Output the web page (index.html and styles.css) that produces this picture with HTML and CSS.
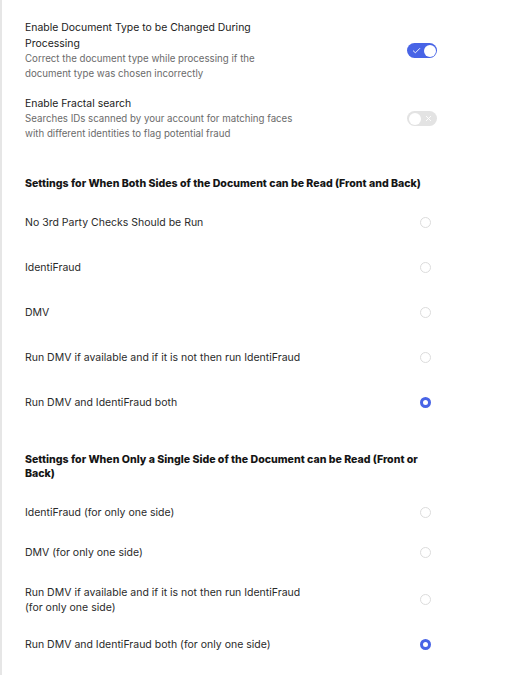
FILE: index.html
```
<!DOCTYPE html>
<html>
<head>
<meta charset="utf-8">
<link rel="stylesheet" href="styles.css">
</head>
<body>
<div class="panel">
  <div class="setting setting-cut">
    <div class="setting-text">
      <div class="desc">Verify the document before scanning</div>
    </div>
  </div>
  <div class="setting">
    <div class="setting-text">
      <div class="title">Enable Document Type to be Changed During Processing</div>
      <div class="desc">Correct the document type while processing if the document type was chosen incorrectly</div>
    </div>
    <span class="toggle on">
      <svg class="toggle-mark" width="9" height="7" viewBox="0 0 9 7"><path d="M1 3.6 L3.4 5.8 L8 1.2" fill="none" stroke="#fff" stroke-width="0.9"/></svg>
      <span class="knob"></span>
    </span>
  </div>
  <div class="setting">
    <div class="setting-text">
      <div class="title">Enable Fractal search</div>
      <div class="desc">Searches IDs scanned by your account for matching faces with different identities to flag potential fraud</div>
    </div>
    <span class="toggle off">
      <span class="knob"></span>
      <svg class="toggle-mark" width="7" height="7" viewBox="0 0 7 7"><path d="M1 1 L6 6 M6 1 L1 6" fill="none" stroke="#fff" stroke-width="0.9"/></svg>
    </span>
  </div>

  <div class="heading first">Settings for When Both Sides of the Document can be Read (Front and Back)</div>
  <div class="options tall">
    <div class="option"><span class="option-label">No 3rd Party Checks Should be Run</span><span class="radio"></span></div>
    <div class="option"><span class="option-label">IdentiFraud</span><span class="radio"></span></div>
    <div class="option"><span class="option-label">DMV</span><span class="radio"></span></div>
    <div class="option"><span class="option-label">Run DMV if available and if it is not then run IdentiFraud</span><span class="radio"></span></div>
    <div class="option"><span class="option-label">Run DMV and IdentiFraud both</span><span class="radio checked"></span></div>
  </div>

  <div class="heading second">Settings for When Only a Single Side of the Document can be Read (Front or Back)</div>
  <div class="options compact">
    <div class="option"><span class="option-label">IdentiFraud (for only one side)</span><span class="radio"></span></div>
    <div class="option"><span class="option-label">DMV (for only one side)</span><span class="radio"></span></div>
    <div class="option"><span class="option-label">Run DMV if available and if it is not then run IdentiFraud (for only one side)</span><span class="radio"></span></div>
    <div class="option"><span class="option-label">Run DMV and IdentiFraud both (for only one side)</span><span class="radio checked"></span></div>
  </div>
</div>
</body>
</html>
```
FILE: styles.css
```
html, body {
  margin: 0;
  padding: 0;
  background: #ffffff;
  overflow: hidden;
}
body {
  font-family: Inter, "Noto Sans", sans-serif;
  color: #222;
}
.panel {
  border-left: 2px solid #e6e6e6;
  min-height: 688px;
  padding: 0 83px 0 23px;
  box-sizing: border-box;
}
.setting {
  display: flex;
  align-items: center;
  justify-content: space-between;
  margin-bottom: 15px;
}
.setting-cut {
  margin-top: -13px;
  margin-bottom: 18.5px;
}
.setting-text {
  width: 272px;
}
.title {
  font-size: 10.45px;
  line-height: 16px;
  color: #222;
}
.desc {
  font-size: 9.7px;
  line-height: 14.5px;
  color: #6b6b6b;
}
.toggle {
  position: relative;
  display: flex;
  align-items: center;
  justify-content: space-between;
  width: 30px;
  height: 15px;
  border-radius: 8px;
  box-sizing: border-box;
  padding: 0 1.5px 0 1.5px;
  flex-shrink: 0;
}
.toggle.on {
  background: #4864e6;
  padding-left: 5px;
}
.toggle.off {
  background: #e3e3e3;
  padding-right: 5px;
}
.knob {
  width: 12px;
  height: 12px;
  border-radius: 50%;
  background: #fff;
}
.toggle-mark {
  display: block;
}
.heading {
  font-size: 10.6px;
  line-height: 14px;
  font-weight: 800;
  color: #151515;
  padding-right: 10px;
}
.heading.first {
  margin-top: 36px;
  margin-bottom: 9px;
}
.heading.second {
  margin-top: 28px;
  margin-bottom: 11px;
}
.option {
  display: flex;
  align-items: center;
  justify-content: space-between;
  font-size: 10.5px;
  line-height: 15px;
  color: #2a2a2a;
  padding-right: 6px;
}
.options.tall .option {
  height: 45px;
}
.options.compact .option {
  padding-top: 12.5px;
  padding-bottom: 12.5px;
}
.options.compact .option:last-child {
  padding-top: 10px;
}
.option-label {
  max-width: 280px;
}
.radio {
  width: 11px;
  height: 11px;
  border-radius: 50%;
  border: 1px solid #dcdcdc;
  box-sizing: border-box;
  flex-shrink: 0;
}
.radio.checked {
  border: 3.5px solid #4864e6;
  background: #fff;
}
```
